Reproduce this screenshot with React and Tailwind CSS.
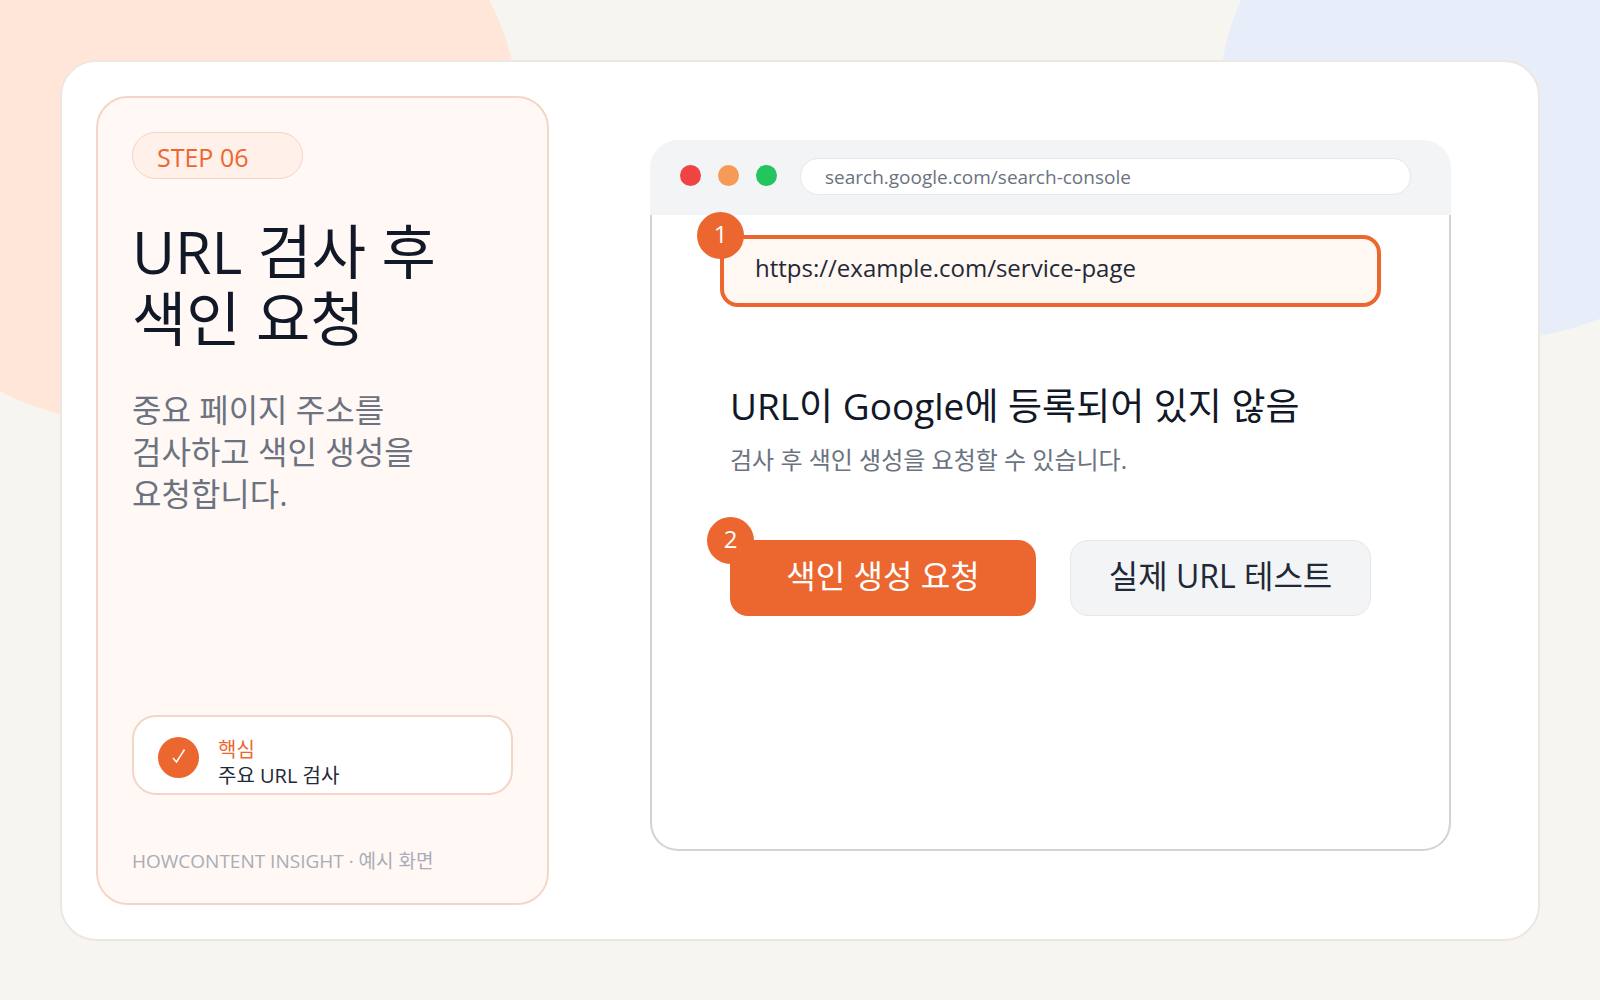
import React, { useState } from 'react'

const Badge = ({ children }) => {
  return (
    <span className="absolute -left-[23px] -top-[23px] z-10 flex h-[47px] w-[47px] items-center justify-center rounded-full bg-[#ec6730] pb-1 text-2xl text-white">
      {children}
    </span>
  )
}

const StepPanel = () => {
  return (
    <aside className="flex w-[453px] shrink-0 flex-col items-start rounded-[32px] border-2 border-[#f4d6c8] bg-[#fff8f5] px-[34px] pt-[34px] pb-7">
      <span className="flex h-[47px] w-[171px] items-center rounded-full border border-[#f6d3c3] bg-[#fff0e9] pl-6 pt-1 text-[25px] text-[#ec6730]">
        STEP 06
      </span>

      <h1 className="mt-[39px] text-[59px] leading-[67px] text-[#111827]">
        URL 검사 후
        <br />
        색인 요청
      </h1>

      <p className="mt-[37px] text-[32px] leading-[42px] text-[#6b7280]">
        중요 페이지 주소를
        <br />
        검사하고 색인 생성을
        <br />
        요청합니다.
      </p>

      <div className="mt-auto flex h-20 w-full items-center rounded-3xl border-2 border-[#f4d6c8] bg-white px-6 pt-1">
        <span className="flex h-[41px] w-[41px] items-center justify-center rounded-full bg-[#ec6730]">
          <svg width="14" height="16" viewBox="0 0 14 16" fill="none" stroke="#fff" strokeWidth="1.5">
            <path d="M1 9 L4.5 13 L12.5 0.5" />
          </svg>
        </span>
        <div className="ml-[19px] pt-3 text-xl leading-[26px]">
          <p className="text-[#ec6730]">핵심</p>
          <p className="text-[#1f2937]">주요 URL 검사</p>
        </div>
      </div>

      <p className="mt-[52px] text-[19px] leading-7 text-[#a9adb5]">HOWCONTENT INSIGHT · 예시 화면</p>
    </aside>
  )
}

const BrowserBar = () => {
  const [address, setAddress] = useState('search.google.com/search-console')

  return (
    <header className="flex h-[75px] items-center rounded-t-[28px] bg-[#f3f4f6] pl-[30px] pr-10">
      <div className="flex gap-[17px] pb-1">
        <span className="h-[21px] w-[21px] rounded-full bg-[#ef4444]"></span>
        <span className="h-[21px] w-[21px] rounded-full bg-[#f59b57]"></span>
        <span className="h-[21px] w-[21px] rounded-full bg-[#22c55e]"></span>
      </div>
      <input
        aria-label="주소"
        type="text"
        value={address}
        onChange={(e) => setAddress(e.target.value)}
        className="mb-[2px] ml-[23px] h-[37px] min-w-0 flex-1 rounded-full border border-[#e5e7eb] bg-white px-6 text-[19px] text-[#6b7280] outline-none"
      />
    </header>
  )
}

const App = () => {
  const [url, setUrl] = useState('https://example.com/service-page')

  return (
    <div className="relative flex min-h-screen overflow-hidden bg-[#f7f5f0] px-[60px] pt-[60px] pb-[59px] font-['Open_Sans','Noto_Sans_CJK_KR',sans-serif]">
      {/* background shapes */}
      <div className="absolute -left-[180px] -top-[180px] h-[610px] w-[700px] rounded-[50%] bg-[#ffe6d9]"></div>
      <div className="absolute -right-[160px] -top-[150px] h-[490px] w-[540px] rounded-[50%] bg-[#e7eef9]"></div>

      <main className="relative flex flex-1 rounded-[36px] border-2 border-[#ece7e0] bg-white p-[34px]">
        <StepPanel />

        <section className="flex flex-1 flex-col pl-[101px] pr-[53px] pt-11 pb-[54px]">
          <BrowserBar />

          <div className="flex-1 rounded-b-[28px] border-2 border-t-0 border-[#d2d2d7] px-[68px] pt-5">
            <div className="relative">
              <Badge>1</Badge>
              <input
                aria-label="검사할 URL"
                type="text"
                value={url}
                onChange={(e) => setUrl(e.target.value)}
                className="h-[72px] w-full rounded-[18px] border-4 border-[#ec6730] bg-[#fff7f1] px-[31px] pb-2 text-2xl text-[#1f2937] outline-none"
              />
            </div>

            <div className="px-[10px] pt-[74px]">
              <h2 className="text-[37px] leading-[50px] text-[#111827]">URL이 Google에 등록되어 있지 않음</h2>
              <p className="mt-[11px] text-2xl leading-9 text-[#6b7280]">검사 후 색인 생성을 요청할 수 있습니다.</p>

              <div className="mt-[62px] flex gap-[34px]">
                <div className="relative">
                  <Badge>2</Badge>
                  <button className="h-[76px] w-[306px] rounded-[18px] bg-[#ec6730] pb-1 text-[32px] text-white">
                    색인 생성 요청
                  </button>
                </div>
                <button className="h-[76px] w-[301px] rounded-[18px] border border-[#e5e7eb] bg-[#f3f4f6] pb-1 text-[32px] text-[#1f2937]">
                  실제 URL 테스트
                </button>
              </div>
            </div>
          </div>
        </section>
      </main>
    </div>
  )
}

export default App
